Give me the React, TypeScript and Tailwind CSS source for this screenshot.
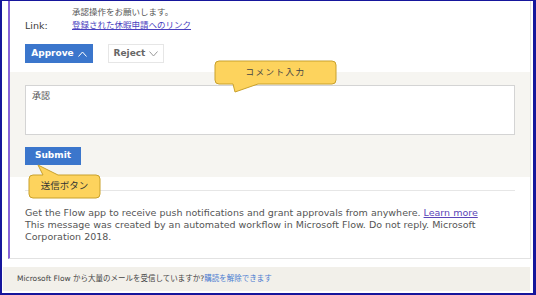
import React from "react";

const font = "font-['DejaVu_Sans','Noto_Sans_CJK_JP',sans-serif]";

const ChevronUp = () => (
  <svg width="9" height="6" viewBox="0 0 9 6" className="ml-[4px]">
    <polyline points="0.5,5.5 4.5,1 8.5,5.5" fill="none" stroke="#ffffff" strokeWidth="1" />
  </svg>
);

const ChevronDown = () => (
  <svg width="9" height="6" viewBox="0 0 9 6" className="ml-[4px]">
    <polyline points="0.5,0.5 4.5,5 8.5,0.5" fill="none" stroke="#9a9a9a" strokeWidth="1" />
  </svg>
);

const App = () => {
  return (
    <div
      className={`relative w-[536px] h-[295px] bg-white border-[#16169c] border-l-2 border-t border-r-[3px] border-b-2 overflow-hidden ${font}`}
    >
      <div className="pl-[6px] pr-[2px]">
        {/* email card */}
        <div className="h-[258px] border-l-2 border-l-[#8764d8] border-r border-b border-[#e2e2e2] flex flex-col">
          <div className="pl-[15px] pt-[5px]">
            <div className="flex h-[13px] items-center">
              <div className="w-[47px]" />
              <span className="text-[8.5px] text-[#555] leading-none">承認操作をお願いします。</span>
            </div>
            <div className="flex h-[13px] items-center">
              <span className="w-[47px] text-[9.5px] text-[#3a3a3a] leading-none">Link:</span>
              <span className="text-[8.5px] text-[#4a3fc0] underline leading-none">登録された休暇申請へのリンク</span>
            </div>
            <div className="flex gap-[15px] mt-[12px]">
              <div className="w-[68px] h-[19px] bg-[#3b76cc] flex items-center justify-center text-white text-[9px] font-bold">
                Approve
                <ChevronUp />
              </div>
              <div className="w-[56px] h-[19px] bg-white border border-[#e6e6e6] flex items-center justify-center text-[#666] text-[9px] font-bold">
                Reject
                <ChevronDown />
              </div>
            </div>
          </div>

          {/* comment area */}
          <div className="mt-[9px] h-[105px] bg-[#f6f5f1] px-[15px] pt-[13px]">
            <div className="h-[50px] bg-white border border-[#d4d4d4] pl-[6px] pt-[6px] text-[9px] text-[#555] leading-none">
              承認
            </div>
            <div className="mt-[12px] w-[56px] h-[18px] bg-[#3b76cc] flex items-center justify-center text-white text-[9px] font-bold">
              Submit
            </div>
          </div>

          <div className="mx-[15px] mt-[13px] h-px bg-[#e6e6e6]" />

          <div className="mx-[15px] mt-[16px] text-[9.5px] leading-[12px] text-[#555]">
            <p>
              Get the Flow app to receive push notifications and grant approvals from anywhere.{" "}
              <span className="text-[#5b45b8] underline">Learn more</span>
            </p>
            <p>
              This message was created by an automated workflow in Microsoft Flow. Do not reply. Microsoft
              Corporation 2018.
            </p>
          </div>
        </div>
      </div>

      {/* footer */}
      <div className="mt-[8px] ml-[1px] w-[527px] h-[24px] bg-[#f2f0ea] flex items-center pl-[14px] text-[7.5px] text-[#444] leading-none">
        <span>Microsoft Flow から大量のメールを受信していますか?</span>
        <span className="text-[#4a7bd1]">購読を解除できます</span>
      </div>

      {/* callout: comment */}
      <div className="absolute left-[211px] top-[58px] w-[126px] h-[36px]">
        <svg width="126" height="36" viewBox="0 0 126 36" className="absolute inset-0">
          <path
            d="M6,2 H119 Q123,2 123,6 V21 Q123,25 119,25 H45 L22,33 L20,25 H6 Q2,25 2,21 V6 Q2,2 6,2 Z"
            fill="#fdd35d"
            stroke="#c9a12c"
            strokeWidth="1"
          />
        </svg>
        <div className="absolute left-[2px] top-[2px] w-[121px] h-[23px] flex items-center justify-center text-[8.5px] tracking-[1.5px] text-[#444]">
          コメント入力
        </div>
      </div>

      {/* callout: submit */}
      <div className="absolute left-[25px] top-[162px] w-[76px] h-[37px]">
        <svg width="76" height="37" viewBox="0 0 76 37" className="absolute inset-0">
          <path
            d="M6,12 H16 L11,2 L31,12 H69 Q73,12 73,16 V31 Q73,35 69,35 H6 Q2,35 2,31 V16 Q2,12 6,12 Z"
            fill="#fdd35d"
            stroke="#c9a12c"
            strokeWidth="1"
          />
        </svg>
        <div className="absolute left-[2px] top-[12px] w-[71px] h-[23px] flex items-center justify-center text-[9.5px] text-[#333]">
          送信ボタン
        </div>
      </div>
    </div>
  );
};

export default App;
